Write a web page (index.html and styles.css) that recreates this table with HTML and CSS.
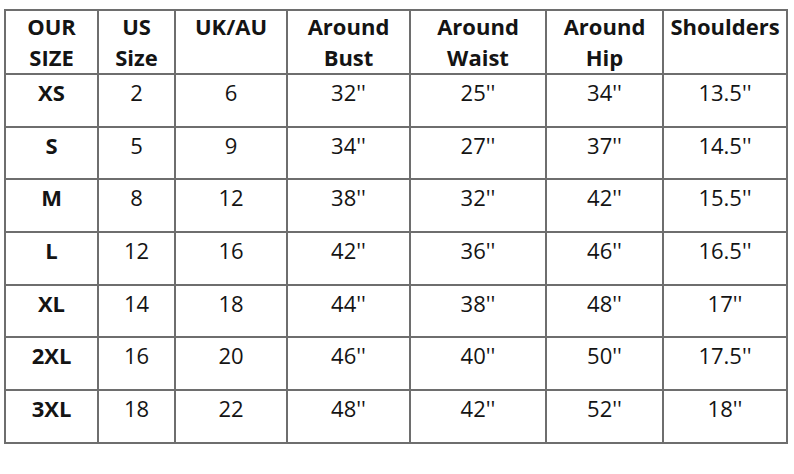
FILE: index.html
```html
<!DOCTYPE html>
<html>
<head>
<meta charset="utf-8">
<link rel="stylesheet" href="styles.css">
</head>
<body>
<table class="chart">
  <colgroup>
    <col class="c1"><col class="c2"><col class="c3"><col class="c4"><col class="c5"><col class="c6"><col class="c7">
  </colgroup>
  <thead>
    <tr class="head">
      <th>OUR<br>SIZE</th><th>US<br>Size</th><th>UK/AU</th><th>Around<br>Bust</th><th>Around<br>Waist</th><th>Around<br>Hip</th><th>Shoulders</th>
    </tr>
  </thead>
  <tbody>
    <tr><th>XS</th><td>2</td><td>6</td><td>32''</td><td>25''</td><td>34''</td><td>13.5''</td></tr>
    <tr><th>S</th><td>5</td><td>9</td><td>34''</td><td>27''</td><td>37''</td><td>14.5''</td></tr>
    <tr><th>M</th><td>8</td><td>12</td><td>38''</td><td>32''</td><td>42''</td><td>15.5''</td></tr>
    <tr><th>L</th><td>12</td><td>16</td><td>42''</td><td>36''</td><td>46''</td><td>16.5''</td></tr>
    <tr><th>XL</th><td>14</td><td>18</td><td>44''</td><td>38''</td><td>48''</td><td>17''</td></tr>
    <tr><th>2XL</th><td>16</td><td>20</td><td>46''</td><td>40''</td><td>50''</td><td>17.5''</td></tr>
    <tr><th>3XL</th><td>18</td><td>22</td><td>48''</td><td>42''</td><td>52''</td><td>18''</td></tr>
  </tbody>
</table>
</body>
</html>
```
FILE: styles.css
```css
html, body {
  margin: 0;
  padding: 0;
  background: #ffffff;
}
body {
  padding: 9px 0 0 4px;
  font-family: "Open Sans", "Liberation Sans", sans-serif;
  color: #141414;
}
.chart {
  border-collapse: collapse;
  table-layout: fixed;
  width: 784px;
}
.c1 { width: 93px; }
.c2 { width: 77px; }
.c3 { width: 112px; }
.c4 { width: 123px; }
.c5 { width: 136px; }
.c6 { width: 117px; }
.c7 { width: 124px; }
.chart th, .chart td {
  border: 2px solid #6e6e6e;
  text-align: center;
  vertical-align: top;
  font-size: 22px;
  line-height: 31px;
  padding: 2px 0 0 0;
}
.chart th { font-weight: 700; }
.chart td { font-weight: 400; }
.head th { height: 64px; padding-top: 0; box-sizing: border-box; }
.chart tbody tr { height: 52.7px; }
```
